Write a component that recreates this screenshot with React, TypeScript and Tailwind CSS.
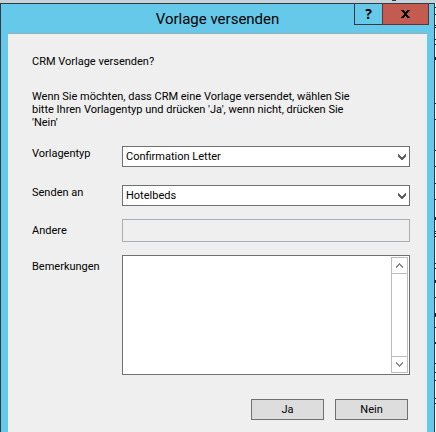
import type { ReactNode } from "react";

const marks = [7, 14, 25, 27, 39, 44, 57, 58, 59, 103, 119, 150, 166, 183, 199, 217, 218, 219, 231, 233, 236, 263, 268, 280, 281, 282, 297, 313, 314, 315, 316, 327, 342, 343, 363, 372, 380, 398, 403];

function Row({ id, label, labelClass, children }: { id: string; label: string; labelClass: string; children: ReactNode }) {
  return (
    <div className="flex items-start">
      <label htmlFor={id} className={"w-[90px] shrink-0 leading-4 " + labelClass}>{label}</label>
      <div className="min-w-0 flex-1">{children}</div>
    </div>
  );
}

function Select({ id, value }: { id: string; value: string }) {
  return (
    <div className="relative">
      <select id={id} defaultValue={value} className="block h-[21px] w-full appearance-none border border-[#707070] bg-white pt-0.5 pr-5 pl-[3px] text-black outline-none">
        <option>{value}</option>
      </select>
      <svg className="pointer-events-none absolute top-2 right-1 h-[6px] w-2" viewBox="0 0 8 6" shapeRendering="crispEdges">
        <path d="M0 0h1v1h1v1h1v1h2v-1h1v-1h1v-1h1v3h-1v1h-1v1h-1v1h-2v-1h-1v-1h-1v-1h-1z" fill="#606060" />
      </svg>
    </div>
  );
}

function ScrollButton({ down }: { down?: boolean }) {
  return (
    <button type="button" aria-label={down ? "Nach unten" : "Nach oben"} className={"flex h-4 w-full items-center justify-center border-[#bcbcbc] " + (down ? "border-t" : "border-b")}>
      <svg className={"h-[5px] w-[7px] " + (down ? "rotate-180" : "")} viewBox="0 0 7 5" shapeRendering="crispEdges">
        <path d="M3 0h1v1h1v1h1v1h1v2h-1v-1h-1v-1h-1v-1h-1v1h-1v1h-1v1h-1v-2h1v-1h1v-1h1z" fill="#858585" />
      </svg>
    </button>
  );
}

export default function App() {
  return (
    <div className="flex min-h-screen flex-col bg-white font-['Roboto','Liberation_Sans',sans-serif] text-[11px] text-black">
      <div className="flex h-[3px] bg-[#c5d3da] pr-10">
        <span className="ml-auto h-px w-1 bg-[#30383c]" />
      </div>
      <div className="flex flex-1">
        <main className="flex min-w-0 flex-1 flex-col border-x border-t border-[#333b40] bg-[#66c9e9] px-[7px]">
          <header className="relative flex h-[29px] items-center justify-center">
            <h1 className="text-[15px] leading-5">Vorlage versenden</h1>
            <div className="absolute -top-px -right-0.5 flex h-[22px] font-['Open_Sans',sans-serif] text-sm font-bold">
              <button type="button" aria-label="Hilfe" className="flex w-[28px] items-center justify-center border border-r-0 border-[#333b40]">?</button>
              <button type="button" aria-label="Schließen" className="flex w-[47px] items-center justify-center border border-[#613230] border-t-[#333b40] bg-[#c35b51]">
                <svg className="h-2 w-[9px]" viewBox="0 0 9 8" shapeRendering="crispEdges">
                  <path d="M0 0h3v1h1v1h1v-1h1v-1h3v1h-1v1h-1v1h-1v2h1v1h1v1h1v1h-3v-1h-1v-1h-1v1h-1v1h-3v-1h1v-1h1v-1h1v-2h-1v-1h-1v-1h-1z" />
                </svg>
              </button>
            </div>
          </header>
          <form className="flex-1 border-t border-[#9faeb5] bg-[#efefef] pt-5 pr-[17px] pb-3 pl-6" onSubmit={(e) => e.preventDefault()}>
            <p className="leading-4">CRM Vorlage versenden?</p>
            <p className="mt-5 leading-[13px]">
              Wenn Sie möchten, dass CRM eine Vorlage versendet, wählen Sie<br />
              bitte Ihren Vorlagentyp und drücken 'Ja', wenn nicht, drücken Sie<br />
              'Nein'
            </p>
            <div className="mt-[17px] flex flex-col">
              <Row id="typ" label="Vorlagentyp" labelClass="pt-0"><Select id="typ" value="Confirmation Letter" /></Row>
              <div className="h-[18px]" />
              <Row id="an" label="Senden an" labelClass="pt-0"><Select id="an" value="Hotelbeds" /></Row>
              <div className="h-[13px]" />
              <Row id="andere" label="Andere" labelClass="pt-1">
                <input id="andere" type="text" disabled className="block h-[23px] w-full border border-[#abafb2] bg-[#efefef] px-1" />
              </Row>
              <div className="h-[13px]" />
              <Row id="bem" label="Bemerkungen" labelClass="pt-1">
                <div className="flex h-[120px] border border-[#707070] bg-white p-px">
                  <textarea id="bem" className="min-w-0 flex-1 resize-none px-1 outline-none" />
                  <div className="flex w-[17px] flex-col justify-between border border-[#bcbcbc]">
                    <ScrollButton />
                    <ScrollButton down />
                  </div>
                </div>
              </Row>
            </div>
            <div className="mt-6 flex justify-end gap-[11px] pr-0.5">
              <button type="submit" className="h-[21px] w-[73px] border border-[#707070] bg-[#dddddd] pt-0.5">Ja</button>
              <button type="button" className="h-[21px] w-[73px] border border-[#707070] bg-[#dddddd] pt-0.5">Nein</button>
            </div>
          </form>
        </main>
        <svg className="h-[428px] w-px shrink-0" viewBox="0 3 1 428" shapeRendering="crispEdges">
          {marks.map((y) => <rect key={y} x="0" y={y} width="1" height="1" fill="#222" />)}
        </svg>
      </div>
    </div>
  );
}
